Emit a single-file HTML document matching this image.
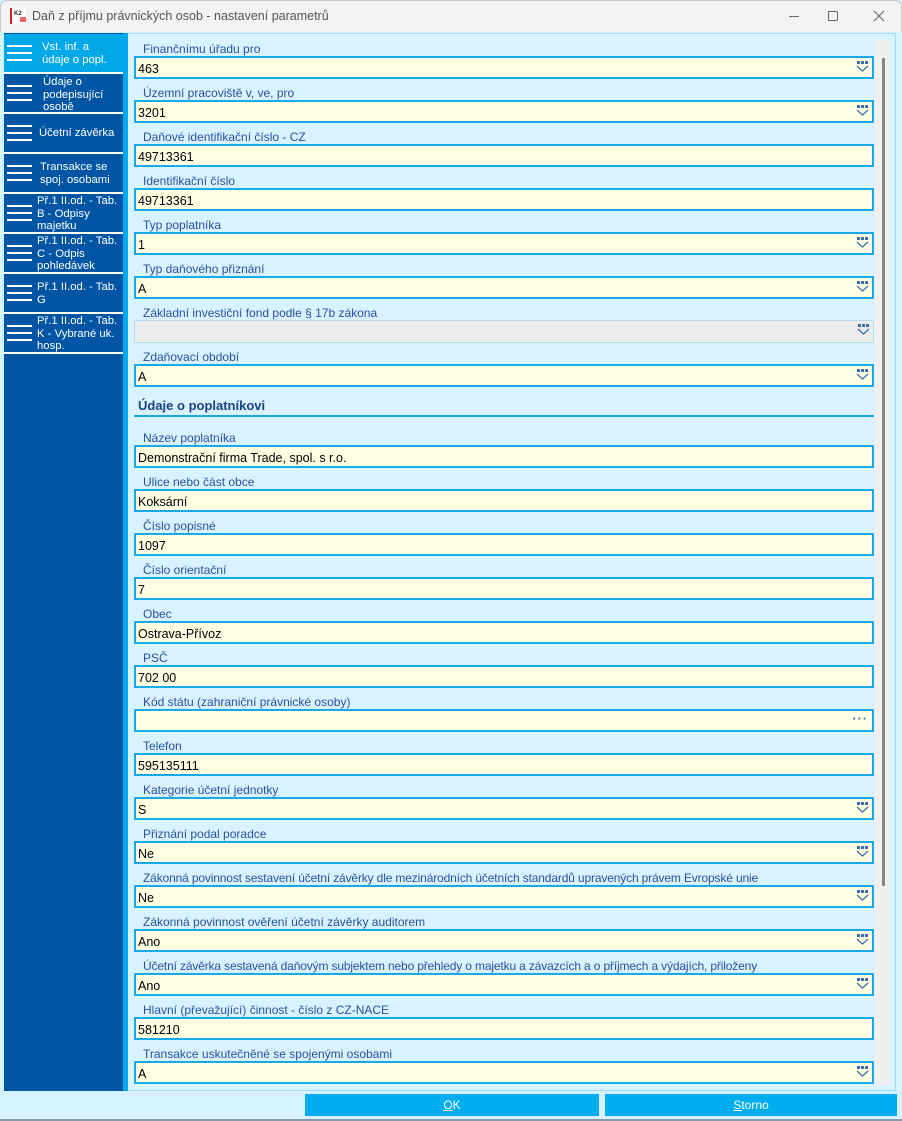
<!DOCTYPE html>
<html><head><meta charset="utf-8"><style>
*{margin:0;padding:0;box-sizing:border-box}
body{width:902px;height:1121px;background:#d6f2ff;font-family:"Liberation Sans",sans-serif;position:relative;overflow:hidden;font-size:12px}
.abs{position:absolute}
#title{left:0;top:0;width:902px;height:32px;background:#f3f3f3;border:1px solid #c8c8c8;border-bottom:none;border-radius:7px 7px 0 0}
#title .t{left:31px;top:8px;color:#555;font-size:12.5px}
#side{left:4px;top:33px;width:119px;height:1058px;background:#0055a5}
.si{position:absolute;left:0;width:119px;height:38px;color:#fff;font-size:11.3px;line-height:12.5px}
.si .ham{position:absolute;left:3px;top:11px;width:25px;height:17px}
.si .ham i{display:block;height:2px;background:#fff;margin-bottom:5px}
.si .tx{position:absolute;left:38px}
.sep{position:absolute;left:0;width:119px;height:2px;background:#fff}
#strip{left:123px;top:33px;width:5px;height:1058px;background:#00a9ed}
#panel{left:128px;top:33px;width:768px;height:1058px;background:#d8f3ff;border:1px solid #9edcf6;border-left:none}
.lab{position:absolute;left:143px;color:#2b4f9e;font-size:12px;margin-top:1px}
.inp{position:absolute;left:134px;width:740px;height:23px;background:#ffffe4;border:2px solid #17a9ea;font-size:12.5px;color:#000;padding:4px 0 0 2px}
.inp.dis{background:#ececec;border:1px solid #b4dcef}
.dd{position:absolute;right:3px;top:3px;width:13px;height:11px}
#sb{left:875px;top:40px;width:15px;height:1045px;background:#efefef}
#thumb{left:882px;top:58px;width:3px;height:828px;background:#858585}
.btn{position:absolute;top:1094px;height:22px;background:#00aeef;color:#fff;text-align:center;line-height:23px;font-size:12px}
</style></head><body>
<div id="title" class="abs">
<div class="abs" style="left:9px;top:7px;width:16px;height:16px;background:#fff;border-left:2px solid #d22">
<div class="abs" style="left:2px;top:3px;font-size:6px;font-weight:bold;color:#222">K2</div>
<div class="abs" style="left:8px;top:9px;width:6px;height:5px;background:#e66"></div></div>
<div class="t abs">Daň z příjmu právnických osob - nastavení parametrů</div>
<div class="abs" style="left:788px;top:15px;width:10px;height:1px;background:#666"></div>
<div class="abs" style="left:827px;top:10px;width:10px;height:10px;border:1px solid #666;border-radius:1px"></div>
<svg class="abs" style="left:872px;top:9px" width="12" height="12"><path d="M1 1L11 11M11 1L1 11" stroke="#666" stroke-width="1.1"/></svg>
</div>

<div id="side" class="abs">
<div class="si" style="top:1px;background:#00a8e8;height:38px"><div class="ham"><i></i><i></i><i></i></div><div class="tx" style="top:7px">Vst. inf. a<br>údaje o popl.</div></div>
<div class="sep" style="top:39px"></div>
<div class="si" style="top:41px"><div class="ham"><i></i><i></i><i></i></div><div class="tx" style="top:2px;left:39px">Údaje o<br>podepisující<br>osobě</div></div>
<div class="sep" style="top:79px"></div>
<div class="si" style="top:81px"><div class="ham"><i></i><i></i><i></i></div><div class="tx" style="top:13px;left:35px">Účetní závěrka</div></div>
<div class="sep" style="top:119px"></div>
<div class="si" style="top:121px"><div class="ham"><i></i><i></i><i></i></div><div class="tx" style="top:7px;left:36px">Transakce se<br>spoj. osobami</div></div>
<div class="sep" style="top:159px"></div>
<div class="si" style="top:161px"><div class="ham"><i></i><i></i><i></i></div><div class="tx" style="top:1px;left:33px">Př.1 II.od. - Tab.<br>B - Odpisy<br>majetku</div></div>
<div class="sep" style="top:199px"></div>
<div class="si" style="top:201px"><div class="ham"><i></i><i></i><i></i></div><div class="tx" style="top:1px;left:33px">Př.1 II.od. - Tab.<br>C - Odpis<br>pohledávek</div></div>
<div class="sep" style="top:239px"></div>
<div class="si" style="top:241px"><div class="ham"><i></i><i></i><i></i></div><div class="tx" style="top:7px;left:33px">Př.1 II.od. - Tab.<br>G</div></div>
<div class="sep" style="top:279px"></div>
<div class="si" style="top:281px"><div class="ham"><i></i><i></i><i></i></div><div class="tx" style="top:1px;left:33px">Př.1 II.od. - Tab.<br>K - Vybrané uk.<br>hosp.</div></div>
<div class="sep" style="top:319px"></div>
</div>
<div id="strip" class="abs"></div>
<div id="panel" class="abs"></div>
<div id="sb" class="abs"></div>
<div id="thumb" class="abs"></div>

<svg width="0" height="0" style="position:absolute"><defs><symbol id="dd" viewBox="0 0 13 11"><rect x="1" y="0" width="3" height="3" fill="#3d6fae"/><rect x="5" y="0" width="3" height="3" fill="#3d6fae"/><rect x="9" y="0" width="3" height="3" fill="#3d6fae"/><path d="M1 5L6.5 10L12 5" stroke="#3d6fae" stroke-width="1.3" fill="none"/></symbol></defs></svg>

<div class="lab" style="top:41px">Finančnímu úřadu pro</div>
<div class="inp" style="top:56px">463<svg class="dd"><use href="#dd"/></svg></div>
<div class="lab" style="top:85px">Územní pracoviště v, ve, pro</div>
<div class="inp" style="top:100px">3201<svg class="dd"><use href="#dd"/></svg></div>
<div class="lab" style="top:129px">Daňové identifikační číslo - CZ</div>
<div class="inp" style="top:144px">49713361</div>
<div class="lab" style="top:173px">Identifikační číslo</div>
<div class="inp" style="top:188px">49713361</div>
<div class="lab" style="top:217px">Typ poplatníka</div>
<div class="inp" style="top:232px">1<svg class="dd"><use href="#dd"/></svg></div>
<div class="lab" style="top:261px">Typ daňového přiznání</div>
<div class="inp" style="top:276px">A<svg class="dd"><use href="#dd"/></svg></div>
<div class="lab" style="top:305px">Základní investiční fond podle § 17b zákona</div>
<div class="inp dis" style="top:320px"><svg class="dd"><use href="#dd"/></svg></div>
<div class="lab" style="top:349px">Zdaňovací období</div>
<div class="inp" style="top:364px">A<svg class="dd"><use href="#dd"/></svg></div>

<div class="abs" style="left:138px;top:398px;font-weight:bold;font-size:13px;color:#1e3f86">Údaje o poplatníkovi</div>
<div class="abs" style="left:134px;top:415px;width:740px;height:2px;background:#17a9ea"></div>

<div class="lab" style="top:430px">Název poplatníka</div>
<div class="inp" style="top:445px">Demonstrační firma Trade, spol. s r.o.</div>
<div class="lab" style="top:474px">Ulice nebo část obce</div>
<div class="inp" style="top:489px">Koksární</div>
<div class="lab" style="top:518px">Číslo popisné</div>
<div class="inp" style="top:533px">1097</div>
<div class="lab" style="top:562px">Číslo orientační</div>
<div class="inp" style="top:577px">7</div>
<div class="lab" style="top:606px">Obec</div>
<div class="inp" style="top:621px">Ostrava-Přívoz</div>
<div class="lab" style="top:650px">PSČ</div>
<div class="inp" style="top:665px">702 00</div>
<div class="lab" style="top:694px">Kód státu (zahraniční právnické osoby)</div>
<div class="inp" style="top:709px"><span style="position:absolute;right:4px;top:1px;color:#3d6fae;font-weight:bold;letter-spacing:1px">···</span></div>
<div class="lab" style="top:738px">Telefon</div>
<div class="inp" style="top:753px">595135111</div>
<div class="lab" style="top:782px">Kategorie účetní jednotky</div>
<div class="inp" style="top:797px">S<svg class="dd"><use href="#dd"/></svg></div>
<div class="lab" style="top:826px">Přiznání podal poradce</div>
<div class="inp" style="top:841px">Ne<svg class="dd"><use href="#dd"/></svg></div>
<div class="lab" style="top:870px;letter-spacing:-0.15px">Zákonná povinnost sestavení účetní závěrky dle mezinárodních účetních standardů upravených právem Evropské unie</div>
<div class="inp" style="top:885px">Ne<svg class="dd"><use href="#dd"/></svg></div>
<div class="lab" style="top:914px">Zákonná povinnost ověření účetní závěrky auditorem</div>
<div class="inp" style="top:929px">Ano<svg class="dd"><use href="#dd"/></svg></div>
<div class="lab" style="top:958px;letter-spacing:-0.15px">Účetní závěrka sestavená daňovým subjektem nebo přehledy o majetku a závazcích a o příjmech a výdajích, přiloženy</div>
<div class="inp" style="top:973px">Ano<svg class="dd"><use href="#dd"/></svg></div>
<div class="lab" style="top:1002px">Hlavní (převažující) činnost - číslo z CZ-NACE</div>
<div class="inp" style="top:1017px">581210</div>
<div class="lab" style="top:1046px">Transakce uskutečněné se spojenými osobami</div>
<div class="inp" style="top:1061px">A<svg class="dd"><use href="#dd"/></svg></div>

<div class="btn" style="left:305px;width:294px"><u>O</u>K</div>
<div class="btn" style="left:605px;width:292px"><u>S</u>torno</div>
<div class="abs" style="left:0;top:1119px;width:902px;height:2px;background:#8a9aa5"></div>
</body></html>
